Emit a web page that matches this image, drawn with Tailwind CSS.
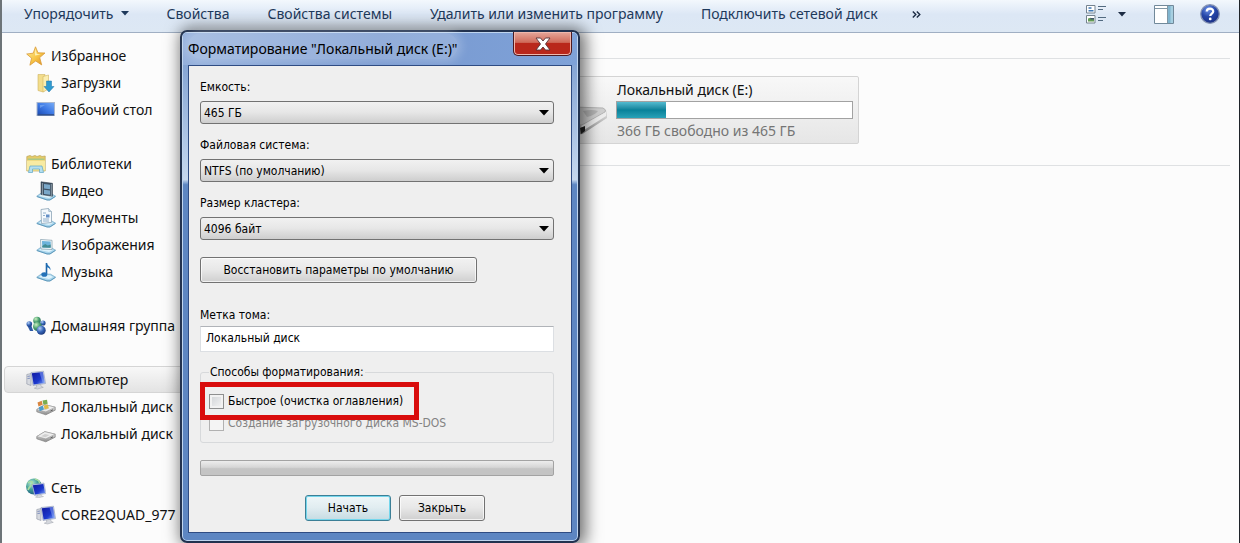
<!DOCTYPE html>
<html lang="ru">
<head>
<meta charset="utf-8">
<title>Форматирование "Локальный диск (E:)"</title>
<script src="https://cdn.jsdelivr.net/npm/@tailwindcss/browser@4"></script>
</head>
<body class="relative flex h-screen flex-col overflow-hidden border-l-2 border-r border-l-[#6d7478] border-r-[#1e2329] bg-[#fcfcfc] font-['Noto_Sans','Open_Sans',sans-serif] text-sm text-[#111]">

<svg class="absolute h-0 w-0" aria-hidden="true">
  <defs>
    <linearGradient id="gold" x1="0" y1="0" x2="1" y2="1"><stop offset="0" stop-color="#fff0a0"/><stop offset=".55" stop-color="#f7c545"/><stop offset="1" stop-color="#db8a22"/></linearGradient>
    <linearGradient id="screen" x1="0" y1="0" x2="1" y2="1"><stop offset="0" stop-color="#1018a0"/><stop offset=".6" stop-color="#1c38cc"/><stop offset="1" stop-color="#7ca4f8"/></linearGradient>
    <linearGradient id="desk" x1="0" y1="1" x2="1" y2="0"><stop offset="0" stop-color="#1b4bb4"/><stop offset=".5" stop-color="#3f7be6"/><stop offset="1" stop-color="#76aaf5"/></linearGradient>
    <linearGradient id="metal" x1="0" y1="0" x2="0" y2="1"><stop offset="0" stop-color="#f3f3f3"/><stop offset="1" stop-color="#8c8c8c"/></linearGradient>
    <radialGradient id="globe" cx=".35" cy=".3" r=".8"><stop offset="0" stop-color="#b8ecd8"/><stop offset=".5" stop-color="#3f9c94"/><stop offset="1" stop-color="#1b4f80"/></radialGradient>
    <radialGradient id="ballb" cx=".35" cy=".3" r=".8"><stop offset="0" stop-color="#b5d0f5"/><stop offset=".5" stop-color="#3565b8"/><stop offset="1" stop-color="#17306f"/></radialGradient>
    <radialGradient id="ballg" cx=".35" cy=".3" r=".8"><stop offset="0" stop-color="#c9f0c0"/><stop offset=".5" stop-color="#4ba070"/><stop offset="1" stop-color="#1d5b58"/></radialGradient>
    <radialGradient id="help" cx=".4" cy=".25" r=".8"><stop offset="0" stop-color="#6f94e8"/><stop offset=".5" stop-color="#2546a8"/><stop offset="1" stop-color="#1a2c80"/></radialGradient>
    <symbol id="tray" viewBox="0 0 20 20"><path d="M.8 15.2 5 12.2h9.5l5 3-5.500 3.600H11z" fill="#a9d5ec" stroke="#6fa6c6" stroke-width=".7"/><path d="m3 15 2.600-1.800h8.400l3 1.800-4 2z" fill="#dff3fc"/><path d="m.8 15.600 10.200 3.400h3l5.500-3.600" fill="none" stroke="#4f8fb5" stroke-width=".8"/></symbol>
    <symbol id="pc" viewBox="0 0 20 20"><path d="M.8 4.500 5 3.500v12L.8 14z" fill="#d6d9df" stroke="#8f96a5" stroke-width=".6"/><path d="M1.500 6.500 4 6M1.500 8.500 4 8.200" stroke="#6c7fb8" stroke-width=".8"/><path d="m5 2.500 12.500-1.300L19.500 13.500 7 15.500z" fill="#cdd7ec" stroke="#8b97b5" stroke-width=".6"/><path d="m5.800 3.300 11-1.200L18.700 12.900 7.600 14.600z" fill="url(#screen)"/><path d="m13.500 2.500 3.300-.4 1.900 10.800-1.900.3z" fill="#a9c6ff" opacity=".4"/><path d="m10.500 15 4-.7.8 2.200 2 .8-5.800 1.700-3.200-.8 2.400-1z" fill="#d5d8de" stroke="#9a9fa8" stroke-width=".5"/></symbol>
    <symbol id="disk" viewBox="0 0 20 20"><path d="m.8 12.500 8-4.800 10.400 2.500v3l-9.400 4.600L.8 14.800z" fill="url(#metal)" stroke="#808080" stroke-width=".7"/><path d="m.8 12.500 8-4.800 10.400 2.500-9.400 4.600z" fill="#eee" stroke="#999" stroke-width=".5"/><path d="m5 12.200 4-2.300 4.600 1.100-4.200 2.200z" fill="#d0d0d0"/><path d="m14.500 14 2.500-1.200" stroke="#555" stroke-width=".9"/></symbol>
  </defs>
</svg>

<nav class="flex h-[33px] shrink-0 items-center justify-between border-b border-[#a0afc3] bg-linear-to-b from-[#f3f8fd] from-0% via-[#dce7f5] via-45% to-[#dde8f4] pb-1 text-[#1e395b]">
  <div class="flex items-center gap-[38px] pl-[22px]">
    <button class="flex items-center gap-[7px]">Упорядочить
      <svg class="mt-[-2px] h-[5px] w-2" viewBox="0 0 8 5"><path d="M0 0h8L4 4.500z" fill="#1e395b"/></svg></button>
    <button>Свойства</button>
    <button>Свойства системы</button>
    <button>Удалить или изменить программу</button>
    <button>Подключить сетевой диск</button>
    <button class="-ml-1" aria-label="Ещё"><svg class="h-[7px] w-[9px]" viewBox="0 0 9 7"><path d="m.8.500 3 3-3 3M4.800.500l3 3-3 3" fill="none" stroke="#1c2c44" stroke-width="1.400"/></svg></button>
  </div>
  <div class="flex items-center pr-[19px]">
    <button aria-label="Вид"><svg class="h-5 w-5" viewBox="0 0 20 20"><g fill="#fff" stroke="#75838f"><path d="M.5 1.500h8.500v7.500H.5zM.5 11.500h8.500V19H.5z"/></g><path d="M2.500 4h3M2.500 6.800h5" stroke="#3f78b5" stroke-width="1.500"/><path d="M2 17.500v-3l2.500-.8L8 15v2.500z" fill="#629a55"/><path d="M4.500 14H8v1.500H4.500z" fill="#43556d"/><path d="M12 2.500h8M12 5.500h5M12 13.500h8M12 16.500h5" stroke="#526a80" stroke-width="1.200"/></svg></button>
    <button class="ml-3" aria-label="Выбор вида"><svg class="h-[5px] w-2" viewBox="0 0 8 5"><path d="M0 0h8L4 4.500z" fill="#1c2c44"/></svg></button>
    <button class="ml-7" aria-label="Область просмотра"><svg class="h-[19px] w-5" viewBox="0 0 20 19"><path d="M.5.500h19v18H.5z" fill="#fff" stroke="#71899a"/><path d="M13.500 1H19v17h-5.500z" fill="#7fb4ce"/><path d="M16.500 1H19v17h-2.500z" fill="#a6cfe1"/><path d="M1 3.500h12.500M13.500 1v17" stroke="#8096a5"/></svg></button>
    <button class="ml-[26px]" aria-label="Справка"><svg class="h-5 w-5" viewBox="0 0 20 20"><circle cx="10" cy="10" r="9.300" fill="url(#help)" stroke="#8593b3" stroke-width="1.300"/><path d="M6.700 7.500C6.900 3.700 13.300 3.800 13.200 7.400c0 2.100-3 2.300-3 4.700" fill="none" stroke="#fff" stroke-width="2.200"/><circle cx="10.200" cy="14.900" r="1.400" fill="#fff"/></svg></button>
  </div>
</nav>

<div class="flex min-h-0 flex-1">
  <aside class="w-[188px] shrink-0 overflow-hidden pt-[9px] pl-[2px] whitespace-nowrap">
    <div class="mb-[27px]">
      <a href="#" class="flex h-[27px] items-center gap-[5px] pl-[22px]"><svg class="h-5 w-5 shrink-0" viewBox="0 0 20 20"><path d="m9.500.800 2.500 6 7 .2-5.300 4.600 2 7.300-6-3.900-5.800 4.200 1.700-7L.7 8l6.500-.8z" fill="url(#gold)" stroke="#d99b38" stroke-width=".8"/><path d="m9.300 3 1.500 5 4.200.4-6 1.100z" fill="#fffbd2" opacity=".8"/></svg>Избранное</a>
      <a href="#" class="flex h-[27px] items-center gap-[5px] pl-8"><svg class="h-5 w-5 shrink-0" viewBox="0 0 20 20"><path d="M2 1.500h7v16l-2 1.500-5-1.500z" fill="#f3dd8b" stroke="#ceb262" stroke-width=".6"/><path d="M7 3.500 12.500 2v14L7 19z" fill="#fbeeb0" stroke="#d2b660" stroke-width=".6"/><path d="M10.500 8h5v5.500h2.500l-5 5.500-5-5.500h2.500z" fill="#2f9bd0" stroke="#1d74aa" stroke-width=".5"/></svg>Загрузки</a>
      <a href="#" class="flex h-[27px] items-center gap-[5px] pl-8"><svg class="h-5 w-5 shrink-0" viewBox="0 0 20 20"><path d="M.5 2h18.500v14H.5z" fill="#a9b7cf"/><path d="M1.500 3h16.500v11.500H1.500z" fill="url(#desk)"/><path d="M1.500 14.300h16.500v1.200H1.500z" fill="#16387a"/><path d="M4 8V5h5z" fill="#8db9f6" opacity=".5"/></svg>Рабочий стол</a>
    </div>
    <div class="mb-[27px]">
      <a href="#" class="flex h-[27px] items-center gap-[5px] pl-[22px]"><svg class="h-5 w-5 shrink-0" viewBox="0 0 20 20"><path d="M.8 2.500 4 1.500l2 1 3-1 2 1 3-1 2 1 3.200-.5v15H.8z" fill="#e5cb67" stroke="#bca65b" stroke-width=".7"/><path d="M2 4.500h16V6H2z" fill="#a9c98a"/><path d="M1 6.500h18v10H1z" fill="#f8eba2"/><path d="M4 12h12l1.500 6.500h-4V15h-7v3.500h-4z" fill="#b5dfee" stroke="#5da6c8" stroke-width=".7"/></svg>Библиотеки</a>
      <a href="#" class="flex h-[27px] items-center gap-[5px] pl-8"><svg class="h-5 w-5 shrink-0" viewBox="0 0 20 20"><use href="#tray"/><path d="m5 .8 11.500 1.500v13L5 13.500z" fill="#3f5365" stroke="#26333e" stroke-width=".5"/><path d="m8 3 6 .8v4.400l-6-.7zM8 8.800l6 .7v4.300L8 13z" fill="#7aa8c9"/><path d="M6.400 2.500v11M15.300 3.500v11" stroke="#dce5eb" stroke-dasharray="1 1"/></svg>Видео</a>
      <a href="#" class="flex h-[27px] items-center gap-[5px] pl-8"><svg class="h-5 w-5 shrink-0" viewBox="0 0 20 20"><use href="#tray"/><path d="m5 1.500 7.500-1 3 3v11l-10 1z" fill="#f4f9fd" stroke="#8da4b6" stroke-width=".8"/><path d="m12.500.500.300 3h2.700" fill="#c9dcea" stroke="#8da4b6" stroke-width=".6"/><path d="M7 5h3M7 7.500h2M7 11h6M7 13h6" stroke="#86a7c5" stroke-width=".9"/><path d="M10 6.500h3.500v3H10z" fill="#638fc6"/></svg>Документы</a>
      <a href="#" class="flex h-[27px] items-center gap-[5px] pl-8"><svg class="h-5 w-5 shrink-0" viewBox="0 0 20 20"><use href="#tray"/><path d="m4.500 4.500 11.500.8v9.200L5 14z" fill="#f5fafc" stroke="#8ba4b3" stroke-width=".8"/><path d="m6 6 8.700.6v6.200L6.300 12.500z" fill="#6cb2da"/><path d="m6.200 11 3-2 2.500 1.500 3-1v3.300l-8.400-.3z" fill="#438c93"/></svg>Изображения</a>
      <a href="#" class="flex h-[27px] items-center gap-[5px] pl-8"><svg class="h-5 w-5 shrink-0" viewBox="0 0 20 20"><use href="#tray"/><path d="M10.500 1v11" stroke="#1c65a8" stroke-width="1.600"/><path d="M10.500.500c.5 3.500 5 3.700 3.800 8-.5-2.500-2-3-3.800-3.500z" fill="#2472b8"/><ellipse cx="8.300" cy="12.500" rx="3" ry="2.300" fill="#2472b8"/></svg>Музыка</a>
    </div>
    <div class="mb-[27px]">
      <a href="#" class="flex h-[27px] items-center gap-[5px] pl-[22px]"><svg class="h-5 w-5 shrink-0" viewBox="0 0 20 20"><path d="M1.500 10h4l1.800 5H4z" fill="#2f5aa5"/><circle cx="3.300" cy="8" r="2.800" fill="url(#ballb)"/><circle cx="11" cy="4.500" r="3.800" fill="url(#ballg)"/><circle cx="17" cy="7" r="2.600" fill="url(#ballb)"/><circle cx="11.500" cy="10.500" r="4.500" fill="url(#ballg)"/><circle cx="15.200" cy="14.200" r="4.500" fill="url(#ballb)"/></svg>Домашняя группа</a>
    </div>
    <div class="mb-[27px]">
      <a href="#" class="flex h-[27px] items-center gap-[5px] rounded-sm border border-[#d5d5d5] bg-linear-to-b from-[#f8f8f8] to-[#e3e3e3] pl-[21px]"><svg class="h-5 w-5 shrink-0" viewBox="0 0 20 20"><use href="#pc"/></svg>Компьютер</a>
      <a href="#" class="flex h-[27px] items-center gap-[5px] pl-8"><svg class="h-5 w-5 shrink-0" viewBox="0 0 20 20"><use href="#disk"/><path d="m1.500 5.500 4.200-1.700 1 4-4.200 1.800z" fill="#d88540"/><path d="m6.500 3.500 4.500-.7.700 4-4.300 1z" fill="#79ad50"/><path d="m2.700 10.300 4.200-1.600 1 3.800-4.200 1.700z" fill="#4e9bc8"/><path d="m7.800 8.500 4.100-.9.900 3.700-4.100 1z" fill="#e1ba43"/></svg>Локальный диск</a>
      <a href="#" class="flex h-[27px] items-center gap-[5px] pl-8"><svg class="h-5 w-5 shrink-0" viewBox="0 0 20 20"><use href="#disk"/></svg>Локальный диск</a>
    </div>
    <div>
      <a href="#" class="flex h-[27px] items-center gap-[5px] pl-[22px]"><svg class="h-5 w-5 shrink-0" viewBox="0 0 20 20"><circle cx="8" cy="8.500" r="8" fill="url(#globe)"/><path d="M2 5c3-3 5-1 4 1S3 9 2 12M9 1c4 1 5 3 4 4" fill="none" stroke="#a8dca0" stroke-width="1.600"/><path d="m6 6.500 12-1.500 2 10.500-11.500 2z" fill="#cdd7ec" stroke="#8b97b5" stroke-width=".5"/><path d="m6.800 7.200 10.600-1.300 1.700 9L9 16.600z" fill="url(#screen)"/><path d="m11 17 4-.6.500 1.600 2 .5-5 1.300-3-.7 1.800-.8z" fill="#d5d8de" stroke="#9a9fa8" stroke-width=".4"/></svg>Сеть</a>
      <a href="#" class="flex h-[27px] items-center gap-[5px] pl-8"><svg class="h-5 w-5 shrink-0" viewBox="0 0 20 20"><use href="#pc"/></svg>CORE2QUAD_977</a>
    </div>
  </aside>

  <main class="flex-1 pr-[9px] pt-[25px]">
    <section class="border-t border-[#dfe1e3] pt-[17px]">
      <a href="#" class="ml-[326px] flex h-[68px] w-[343px] items-center rounded-xs border border-[#d4d4d4] bg-linear-to-b from-[#f8f8f8] to-[#e6e6e6] pl-[36px]">
        <svg class="mt-5 h-[34px] w-[54px] shrink-0" viewBox="0 0 54 34"><path d="M0 18 20 4l30 1q4 1 4 5v5L31 30q-2 2-5 1L0 24z" fill="url(#metal)"/><path d="M0 18 20 4l30 1q4 2 2 4L29 22z" fill="#cfcfcf" stroke="#b4b4b4"/><path d="M28 23 53 9v4L31 27z" fill="#ededed"/><path d="M30 8q9-2 15 0-3 4-11 6z" fill="#b4b4b4"/><path d="m27 25 5-2v5l-4 3z" fill="#222"/></svg>
        <div class="ml-[9px] flex w-[237px] flex-col">
          <span class="pl-px leading-5">Локальный диск (E:)</span>
          <div class="mt-[1px] h-[18px] border border-[#a2a2a2] bg-white"><div class="h-full bg-linear-to-b from-[#52bbd0] from-0% via-[#078199] via-50% to-[#27a2b8]" style="width:21%"></div></div>
          <span class="mt-[2px] pl-px leading-5 text-[#757575]">366 ГБ свободно из 465 ГБ</span>
        </div>
      </a>
    </section>
    <div class="mt-[21px] border-t border-[#dfe1e3]"></div>
  </main>
</div>

<div role="dialog" aria-labelledby="dlg-title" class="absolute top-[30px] left-[178px] flex w-[400px] flex-col rounded-[7px] border-2 border-[#22324f] bg-linear-to-b from-[#7396cc] from-0% via-[#c6d8ee] via-29% to-[#5d86c2] to-30% px-[6px] pb-2 text-black shadow-[3px_1px_16px_3px_rgb(0_0_0_/_0.55)] inset-ring inset-ring-[#bfd5ef]">
  <header class="mx-[-5px] mt-[1px] flex h-8 items-start justify-between rounded-t-[4px] bg-linear-to-r from-[#94b0dc] via-[#7899d0] to-[#7fa2d8] px-[5px]">
    <h1 id="dlg-title" class="rounded-full bg-white/20 pt-[6px] leading-5 shadow-[0_0_8px_4px_rgb(255_255_255_/_0.2)]">Форматирование "Локальный диск (E:)"</h1>
    <button aria-label="Закрыть окно" class="mt-[-1px] flex h-6 w-[59px] items-center justify-center rounded-b-[5px] border border-t-0 border-[#4d1a20] bg-linear-to-b from-[#e5a79b] from-0% via-[#cf6a5a] via-45% to-[#b9271b] to-50% inset-ring inset-ring-[#efb8ad]"><svg class="h-[14px] w-4" viewBox="0 0 16 14"><path d="M1 1h4.500L8 4l2.500-3H15l-4.500 6 4.500 6h-4.500L8 10l-2.500 3H1l4.500-6z" fill="#fff" stroke="#573338" stroke-width=".9"/></svg></button>
  </header>
  <form class="flex flex-col border border-[#2f4c83] bg-[#efefef] pt-[11px] pr-[17px] pb-[11px] pl-[11px] font-['DejaVu_Sans_Condensed','DejaVu_Sans',sans-serif] text-xs">
    <label for="cap" class="mb-1 leading-5">Емкость:</label>
    <div class="relative mb-[11px]">
      <select id="cap" class="block h-[23px] w-full appearance-none rounded-[3px] border border-[#727272] bg-linear-to-b from-[#f1f1f1] from-0% via-[#e7e7e7] via-48% to-[#cecece] pl-[3px]"><option>465 ГБ</option></select>
      <svg class="pointer-events-none absolute top-[9px] right-[5px] h-[6px] w-[10px]" viewBox="0 0 10 6"><path d="M0 0h10L5 5.500z"/></svg>
    </div>
    <label for="fs" class="mb-1 leading-5">Файловая система:</label>
    <div class="relative mb-[11px]">
      <select id="fs" class="block h-[23px] w-full appearance-none rounded-[3px] border border-[#727272] bg-linear-to-b from-[#f1f1f1] from-0% via-[#e7e7e7] via-48% to-[#cecece] pl-[3px]"><option>NTFS (по умолчанию)</option></select>
      <svg class="pointer-events-none absolute top-[9px] right-[5px] h-[6px] w-[10px]" viewBox="0 0 10 6"><path d="M0 0h10L5 5.500z"/></svg>
    </div>
    <label for="cluster" class="mb-1 leading-5">Размер кластера:</label>
    <div class="relative mb-[17px]">
      <select id="cluster" class="block h-[23px] w-full appearance-none rounded-[3px] border border-[#727272] bg-linear-to-b from-[#f1f1f1] from-0% via-[#e7e7e7] via-48% to-[#cecece] pl-[3px]"><option>4096 байт</option></select>
      <svg class="pointer-events-none absolute top-[9px] right-[5px] h-[6px] w-[10px]" viewBox="0 0 10 6"><path d="M0 0h10L5 5.500z"/></svg>
    </div>
    <button type="button" class="h-[26px] w-[277px] rounded-[3px] border border-[#727272] bg-linear-to-b from-[#f2f2f2] from-0% via-[#e8e8e8] via-48% to-[#cfcfcf] inset-ring inset-ring-white/70">Восстановить параметры по умолчанию</button>
    <label for="vol" class="mt-[22px] mb-[1px] leading-5">Метка тома:</label>
    <input id="vol" type="text" value="Локальный диск" class="h-[26px] border border-[#dcdfe3] border-t-[#b0b3b8] bg-white px-[5px] pb-[2px]">
    <fieldset class="mt-[10px] h-[81px] rounded-[3px] border border-[#d7d9db] px-2">
      <legend class="px-[1px] leading-5">Способы форматирования:</legend>
      <div class="relative flex h-[38px] items-center gap-1">
        <span class="pointer-events-none absolute top-0 left-[-9px] z-10 h-[38px] w-[219px] border-[5px] border-[#d90d0d]"></span>
        <input id="quick" type="checkbox" class="h-[15px] w-[15px] appearance-none border border-[#8e8f8f] bg-linear-to-br from-[#cfd2d5] to-[#f6f6f6] inset-ring-2 inset-ring-[#f2f2f2]">
        <label for="quick">Быстрое (очистка оглавления)</label>
      </div>
      <div class="mt-[-5px] flex items-center gap-1 text-[#838383]">
        <input id="dos" type="checkbox" disabled class="h-[15px] w-[15px] appearance-none border border-[#b1b1b1] bg-[#f4f4f4]">
        <label for="dos">Создание загрузочного диска MS-DOS</label>
      </div>
    </fieldset>
    <div role="progressbar" aria-label="Ход форматирования" aria-valuenow="0" class="mt-[17px] h-4 rounded-xs border border-[#a3a3a3] bg-linear-to-b from-[#ededed] from-0% via-[#d6d6d6] via-45% to-[#c4c4c4] to-55%"></div>
    <div class="mt-[19px] flex justify-center gap-2 pl-9">
      <button type="submit" class="h-[26px] w-[86px] rounded-[3px] border border-[#3c7f96] bg-linear-to-b from-[#eef6f8] from-0% via-[#e1edf1] via-48% to-[#c5dbe2] inset-ring inset-ring-[#74d6ec]">Начать</button>
      <button type="button" class="h-[26px] w-[86px] rounded-[3px] border border-[#727272] bg-linear-to-b from-[#f2f2f2] from-0% via-[#e8e8e8] via-48% to-[#cfcfcf] inset-ring inset-ring-white/70">Закрыть</button>
    </div>
  </form>
</div>
</body>
</html>
